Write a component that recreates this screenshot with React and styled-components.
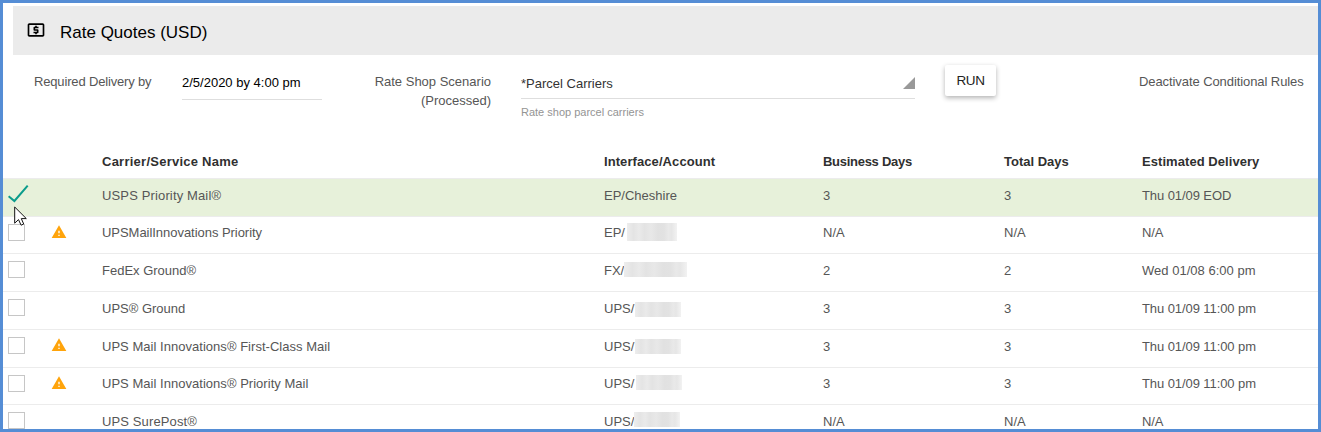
import React from "react";
import styled, { createGlobalStyle } from "styled-components";
import { MdLocalAtm, MdWarning } from "react-icons/md";

const GlobalStyle = createGlobalStyle`
  * { box-sizing: border-box; }
  body {
    margin: 0;
    background: #fff;
    color: #565656;
    font-family: "Liberation Sans", Arial, sans-serif;
    font-size: 13px;
  }
`;

const Frame = styled.main`
  position: relative;
  width: 1321px;
  height: 432px;
  border: 3px solid #558dd5;
  overflow: hidden;
  background: #fff;
`;

const TitleBar = styled.header`
  display: flex;
  align-items: center;
  gap: 14px;
  height: 49px;
  margin: 3px 0 0 10px;
  padding-left: 13px;
  background: #ebebeb;
  color: #000;
  svg { display: block; margin-top: -1px; }
`;

const Title = styled.h1`
  margin: 4px 0 0;
  font-size: 17px;
  font-weight: 400;
  line-height: 20px;
`;

const Filters = styled.section`
  display: flex;
  align-items: flex-start;
  height: 90px;
  padding-left: 31px;
`;

const Label = styled.div`
  width: ${(p) => p.$width}px;
  margin: 17px 0 0 ${(p) => p.$gap || 0}px;
  line-height: 19px;
  letter-spacing: ${(p) => p.$spacing || 0}px;
  text-align: ${(p) => p.$align || "left"};
  white-space: nowrap;
`;

const Field = styled.div`
  display: flex;
  flex-direction: column;
  width: ${(p) => p.$width}px;
  margin-left: ${(p) => p.$gap}px;
`;

const FieldValue = styled.div`
  display: flex;
  justify-content: space-between;
  height: ${(p) => p.$height}px;
  padding-top: ${(p) => p.$top}px;
  border-bottom: 1px solid #dedede;
  color: ${(p) => p.$color};
  line-height: 18px;
  white-space: nowrap;
`;

const Corner = styled.svg`
  display: block;
  width: 12px;
  height: 12px;
  margin-top: 2px;
  fill: #999;
`;

const Hint = styled.div`
  margin-top: 6px;
  font-size: 11px;
  line-height: 14px;
  color: #949494;
`;

const RunButton = styled.button`
  width: 51px;
  height: 31px;
  margin: 10px 0 0 30px;
  padding: 0;
  border: 0;
  border-radius: 2px;
  background: #fff;
  box-shadow: 0 2px 5px rgba(0, 0, 0, 0.3);
  color: #222;
  font: 13.5px/31px "Liberation Sans", Arial, sans-serif;
  letter-spacing: -0.4px;
`;

const Line = styled.div`
  display: grid;
  grid-template-columns: 44px 50px 502px 219px 181px 138px 1fr;
  padding-left: 5px;
  white-space: nowrap;
`;

const HeadRow = styled(Line)`
  height: 33px;
  padding-top: 8px;
  line-height: 18px;
  font-weight: 700;
  color: #303030;
`;

const Heading = styled.span`
  letter-spacing: ${(p) => p.$spacing || 0}px;
`;

const Row = styled(Line)`
  height: ${(p) => p.$height}px;
  border-top: 1px solid #ececec;
  background: ${(p) => (p.$selected ? "#e7f1da" : "#fff")};
`;

const Cell = styled.div`
  display: flex;
  padding-top: ${(p) => p.$top}px;
  line-height: 19px;
  letter-spacing: ${(p) => p.$spacing || 0}px;
`;

const Box = styled.span`
  display: block;
  width: 17px;
  height: 17px;
  border: 1px solid #c6c6c6;
  background: #fff;
`;

const Check = styled.svg`
  display: block;
  width: 21px;
  height: 19px;
  fill: none;
  stroke: #0b9c8b;
  stroke-width: 2;
`;

const Warning = styled(MdWarning)`
  display: block;
  margin-left: -1px;
  color: #ffa40b;
`;

const AccountCell = styled.div`
  display: flex;
  align-items: flex-start;
`;

const AccountPrefix = styled.span`
  width: ${(p) => p.$width}px;
  padding-top: ${(p) => p.$top}px;
  line-height: 19px;
`;

const Redacted = styled.span`
  width: ${(p) => p.$width}px;
  height: ${(p) => p.$height}px;
  margin-top: ${(p) => p.$top}px;
  background: linear-gradient(90deg, #ededed 0, #e4e4e4 13%, #eaeaea 24%, #e3e3e3 35%, #e8e8e8 48%, #e1e1e1 62%, #e2e2e2 74%, #e9e9e9 83%, #e6e6e6 89%, #f2f2f2 100%);
`;

const Pointer = styled.svg`
  position: absolute;
  left: 11px;
  top: 203px;
  width: 14px;
  height: 21px;
`;

const headings = [
  ["Carrier/Service Name", 0.25],
  ["Interface/Account", 0.08],
  ["Business Days", -0.28],
  ["Total Days", 0],
  ["Estimated Delivery", 0.06],
];

const rows = [
  { name: "USPS Priority Mail®", spacing: 0.14, account: "EP/Cheshire", days: "3", eta: "Thu 01/09 EOD", height: 38, selected: true },
  { name: "UPSMailInnovations Priority", spacing: -0.04, account: "EP/", mask: { offset: 23, width: 50, height: 18, top: 6 }, days: "N/A", eta: "N/A", height: 37, textTop: 6, warn: true },
  { name: "FedEx Ground®", account: "FX/", mask: { offset: 20, width: 63, height: 15, top: 8 }, days: "2", eta: "Wed 01/08 6:00 pm", etaSpacing: 0.02, height: 38 },
  { name: "UPS® Ground", account: "UPS/", mask: { offset: 31, width: 46, height: 15, top: 10 }, days: "3", eta: "Thu 01/09 11:00 pm", height: 38 },
  { name: "UPS Mail Innovations® First-Class Mail", spacing: 0.03, account: "UPS/", mask: { offset: 31, width: 46, height: 15, top: 9 }, days: "3", eta: "Thu 01/09 11:00 pm", height: 38, warn: true },
  { name: "UPS Mail Innovations® Priority Mail", spacing: 0.03, account: "UPS/", mask: { offset: 32, width: 46, height: 15, top: 7 }, days: "3", eta: "Thu 01/09 11:00 pm", height: 37, textTop: 6, warn: true },
  { name: "UPS SurePost®", spacing: 0.12, account: "UPS/", mask: { offset: 30, width: 46, height: 15, top: 7 }, days: "N/A", eta: "N/A", height: 38 },
];

function RateRow({ row }) {
  const top = row.textTop ?? 7;
  return (
    <Row $height={row.height} $selected={row.selected}>
      <Cell $top={row.selected ? 5 : 7}>
        {row.selected ? (
          <Check viewBox="0 0 21 19"><path d="M.6 12.2 6.4 17 19.7 1.7" /></Check>
        ) : <Box />}
      </Cell>
      <Cell $top={7}>{row.warn && <Warning size={16} />}</Cell>
      <Cell $top={top} $spacing={row.spacing}>{row.name}</Cell>
      <AccountCell>
        <AccountPrefix $top={top} $width={row.mask?.offset}>{row.account}</AccountPrefix>
        {row.mask && <Redacted $width={row.mask.width} $height={row.mask.height} $top={row.mask.top} />}
      </AccountCell>
      <Cell $top={top}>{row.days}</Cell>
      <Cell $top={top}>{row.days}</Cell>
      <Cell $top={top} $spacing={row.etaSpacing ?? -0.08}>{row.eta}</Cell>
    </Row>
  );
}

export default function App() {
  return (
    <>
      <GlobalStyle />
      <Frame>
        <TitleBar>
          <MdLocalAtm size={20} />
          <Title>Rate Quotes (USD)</Title>
        </TitleBar>
        <Filters>
          <Label $width={118} $spacing={-0.16}>Required Delivery by</Label>
          <Field $width={140} $gap={30}>
            <FieldValue $height={45} $top={19} $color="#000">2/5/2020 by 4:00 pm</FieldValue>
          </Field>
          <Label $width={120} $gap={49} $align="right">Rate Shop Scenario<br />(Processed)</Label>
          <Field $width={394} $gap={30}>
            <FieldValue $height={44} $top={20} $color="#333">
              *Parcel Carriers
              <Corner viewBox="0 0 12 12"><path d="M12 0V12H0Z" /></Corner>
            </FieldValue>
            <Hint>Rate shop parcel carriers</Hint>
          </Field>
          <RunButton>RUN</RunButton>
          <Label $width={166} $gap={143} $spacing={-0.08}>Deactivate Conditional Rules</Label>
        </Filters>
        <HeadRow>
          <span /><span />
          {headings.map(([text, spacing]) => <Heading key={text} $spacing={spacing}>{text}</Heading>)}
        </HeadRow>
        {rows.map((row) => <RateRow key={row.name} row={row} />)}
        <Pointer viewBox="0 0 14 21">
          <path d="M.7 1V17.2L4.5 13.6 7.1 19.2 9.7 18 7.3 12.6H12.3Z" fill="#fff" stroke="#111" />
        </Pointer>
      </Frame>
    </>
  );
}
